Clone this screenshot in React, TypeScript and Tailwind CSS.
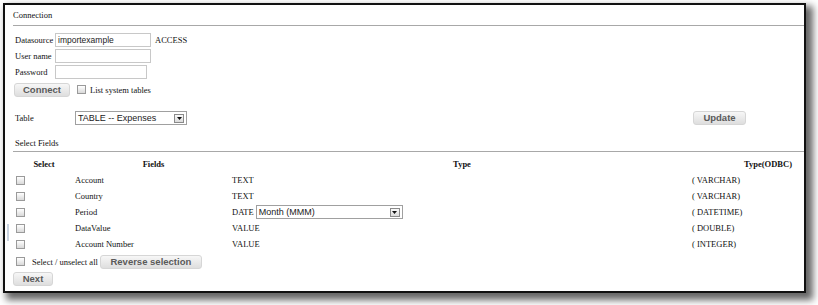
import React from "react";

const serif = { fontFamily: '"Liberation Serif", "Times New Roman", serif' };

function Check() {
  return <span className="inline-block w-[9px] h-[9px] border border-[#9a9a9a] bg-gradient-to-b from-[#ffffff] to-[#d9d9d9] shrink-0" />;
}

function Btn({ label, className }: { label: string; className: string }) {
  return (
    <button className={`h-[14px] rounded-[3px] border border-[#d6d6d6] bg-gradient-to-b from-[#f7f7f7] to-[#dedede] text-[9.5px] font-bold text-[#5a5a5a] leading-none flex items-center justify-center ${className}`} style={{ fontFamily: '"Liberation Sans", Arial, sans-serif' }}>
      {label}
    </button>
  );
}

function Select({ value, className }: { value: string; className: string }) {
  return (
    <div className={`h-[14px] border border-[#a0a0a0] bg-white flex items-center justify-between pl-[2px] pr-[2px] ${className}`}>
      <span className="text-[9px] text-[#222] leading-none" style={{ fontFamily: '"Liberation Sans", Arial, sans-serif' }}>{value}</span>
      <span className="w-[10px] h-[9px] border border-[#8a8a8a] bg-gradient-to-b from-[#fafafa] to-[#dadada] flex items-center justify-center">
        <svg width="5" height="3" viewBox="0 0 5 3"><path d="M0 0h5L2.5 3z" fill="#111" /></svg>
      </span>
    </div>
  );
}

function Input({ value, className }: { value?: string; className: string }) {
  return (
    <div className={`h-[14px] border border-[#c8c8c8] bg-white flex items-center pl-[2px] ${className}`}>
      <span className="text-[8.5px] text-[#222] leading-none" style={{ fontFamily: '"Liberation Sans", Arial, sans-serif' }}>{value}</span>
    </div>
  );
}

const rows = [
  { name: "Account", type: "TEXT", odbc: "( VARCHAR)" },
  { name: "Country", type: "TEXT", odbc: "( VARCHAR)" },
  { name: "Period", type: "DATE", odbc: "( DATETIME)", select: true },
  { name: "DataValue", type: "VALUE", odbc: "( DOUBLE)" },
  { name: "Account Number", type: "VALUE", odbc: "( INTEGER)" },
];

export default function App() {
  return (
    <div className="w-[818px] h-[305px] bg-white pt-[3px] pl-[3px] relative overflow-hidden">
      <div className="w-[803px] h-[290px] border-2 border-[#111] bg-white shadow-[5px_5px_7px_2px_rgba(0,0,0,0.6)] pl-[8px] text-[8.5px] text-[#111] leading-none flex flex-col" style={serif}>
        <div className="h-[19px] mt-[1px] flex items-center">Connection</div>
        <div className="h-px bg-[#a8a8a8]" />

        <div className="mt-[7px] h-[14px] flex items-center">
          <span className="ml-[2px] w-[40px]">Datasource</span>
          <Input value="importexample" className="w-[96px]" />
          <span className="ml-[4px]">ACCESS</span>
        </div>
        <div className="mt-[2px] h-[14px] flex items-center">
          <span className="ml-[2px] w-[40px]">User name</span>
          <Input className="w-[96px]" />
        </div>
        <div className="mt-[2px] h-[14px] flex items-center">
          <span className="ml-[2px] w-[40px]">Password</span>
          <Input className="w-[92px]" />
        </div>
        <div className="mt-[4px] h-[14px] flex items-center">
          <Btn label="Connect" className="ml-[1px] w-[56px]" />
          <span className="ml-[7px]"><Check /></span>
          <span className="ml-[4px]">List system tables</span>
        </div>

        <div className="mt-[14px] h-[14px] flex items-center">
          <span className="ml-[2px] w-[60px]">Table</span>
          <Select value="TABLE -- Expenses" className="w-[112px]" />
          <Btn label="Update" className="ml-[506px] w-[53px]" />
        </div>

        <div className="mt-[11px] h-[14px] flex items-center ml-[2px]">Select Fields</div>
        <div className="mt-[1px] h-px bg-[#a8a8a8]" />

        <div className="mt-[4px] grid grid-cols-[62px_157px_460px_105px]">
          <div className="h-[16px] flex items-center justify-center font-bold">Select</div>
          <div className="h-[16px] flex items-center justify-center font-bold">Fields</div>
          <div className="h-[16px] flex items-center justify-center font-bold">Type</div>
          <div className="h-[16px] flex items-center justify-end pr-[5px] font-bold">Type(ODBC)</div>
          {rows.map((r) => (
            <React.Fragment key={r.name}>
              <div className="h-[16px] flex items-center pl-[3px]"><Check /></div>
              <div className="h-[16px] flex items-center">{r.name}</div>
              <div className="h-[16px] flex items-center">
                <span>{r.type}</span>
                {r.select && <Select value="Month (MMM)" className="ml-[2px] w-[147px]" />}
              </div>
              <div className="h-[16px] flex items-center">{r.odbc}</div>
            </React.Fragment>
          ))}
        </div>

        <div className="mt-[3px] h-[14px] flex items-center">
          <span className="ml-[3px]"><Check /></span>
          <span className="ml-[7px]">Select / unselect all</span>
          <Btn label="Reverse selection" className="ml-[2px] w-[102px]" />
        </div>
        <div className="mt-[3px] h-[14px] flex items-center">
          <Btn label="Next" className="w-[40px]" />
        </div>
      </div>
      <div className="absolute left-[7px] top-[224px] w-[2px] h-[17px] bg-[#c9d3e0]" />
    </div>
  );
}
